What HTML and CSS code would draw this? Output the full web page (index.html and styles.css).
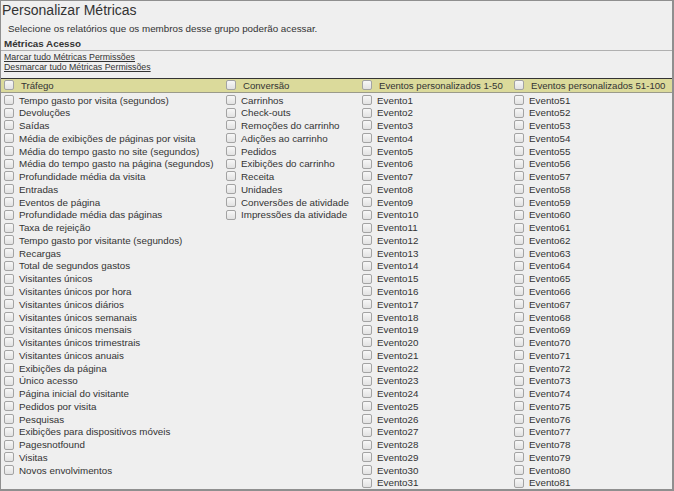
FILE: index.html
```html
<!DOCTYPE html>
<html lang="pt">
<head>
<meta charset="utf-8">
<title>Personalizar Métricas</title>
<link rel="stylesheet" href="styles.css">
</head>
<body>
<div class="frame">
  <h1 class="title">Personalizar Métricas</h1>
  <p class="intro">Selecione os relatórios que os membros desse grupo poderão acessar.</p>
  <div class="section-head">Métricas Acesso</div>
  <div class="links">
    <a href="#" class="link">Marcar tudo Métricas Permissões</a>
    <a href="#" class="link">Desmarcar tudo Métricas Permissões</a>
  </div>
  <div class="band">
    <label class="hcell"><input type="checkbox" class="cb"><span>Tráfego</span></label>
    <label class="hcell"><input type="checkbox" class="cb"><span>Conversão</span></label>
    <label class="hcell"><input type="checkbox" class="cb"><span>Eventos personalizados 1-50</span></label>
    <label class="hcell"><input type="checkbox" class="cb"><span>Eventos personalizados 51-100</span></label>
  </div>
  <div class="cols">
    <ul class="col">
      <li class="item"><input type="checkbox" class="cb"><span>Tempo gasto por visita (segundos)</span></li>
      <li class="item"><input type="checkbox" class="cb"><span>Devoluções</span></li>
      <li class="item"><input type="checkbox" class="cb"><span>Saídas</span></li>
      <li class="item"><input type="checkbox" class="cb"><span>Média de exibições de páginas por visita</span></li>
      <li class="item"><input type="checkbox" class="cb"><span>Média do tempo gasto no site (segundos)</span></li>
      <li class="item"><input type="checkbox" class="cb"><span>Média do tempo gasto na página (segundos)</span></li>
      <li class="item"><input type="checkbox" class="cb"><span>Profundidade média da visita</span></li>
      <li class="item"><input type="checkbox" class="cb"><span>Entradas</span></li>
      <li class="item"><input type="checkbox" class="cb"><span>Eventos de página</span></li>
      <li class="item"><input type="checkbox" class="cb"><span>Profundidade média das páginas</span></li>
      <li class="item"><input type="checkbox" class="cb"><span>Taxa de rejeição</span></li>
      <li class="item"><input type="checkbox" class="cb"><span>Tempo gasto por visitante (segundos)</span></li>
      <li class="item"><input type="checkbox" class="cb"><span>Recargas</span></li>
      <li class="item"><input type="checkbox" class="cb"><span>Total de segundos gastos</span></li>
      <li class="item"><input type="checkbox" class="cb"><span>Visitantes únicos</span></li>
      <li class="item"><input type="checkbox" class="cb"><span>Visitantes únicos por hora</span></li>
      <li class="item"><input type="checkbox" class="cb"><span>Visitantes únicos diários</span></li>
      <li class="item"><input type="checkbox" class="cb"><span>Visitantes únicos semanais</span></li>
      <li class="item"><input type="checkbox" class="cb"><span>Visitantes únicos mensais</span></li>
      <li class="item"><input type="checkbox" class="cb"><span>Visitantes únicos trimestrais</span></li>
      <li class="item"><input type="checkbox" class="cb"><span>Visitantes únicos anuais</span></li>
      <li class="item"><input type="checkbox" class="cb"><span>Exibições da página</span></li>
      <li class="item"><input type="checkbox" class="cb"><span>Único acesso</span></li>
      <li class="item"><input type="checkbox" class="cb"><span>Página inicial do visitante</span></li>
      <li class="item"><input type="checkbox" class="cb"><span>Pedidos por visita</span></li>
      <li class="item"><input type="checkbox" class="cb"><span>Pesquisas</span></li>
      <li class="item"><input type="checkbox" class="cb"><span>Exibições para dispositivos móveis</span></li>
      <li class="item"><input type="checkbox" class="cb"><span>Pagesnotfound</span></li>
      <li class="item"><input type="checkbox" class="cb"><span>Visitas</span></li>
      <li class="item"><input type="checkbox" class="cb"><span>Novos envolvimentos</span></li>
    </ul>
    <ul class="col">
      <li class="item"><input type="checkbox" class="cb"><span>Carrinhos</span></li>
      <li class="item"><input type="checkbox" class="cb"><span>Check-outs</span></li>
      <li class="item"><input type="checkbox" class="cb"><span>Remoções do carrinho</span></li>
      <li class="item"><input type="checkbox" class="cb"><span>Adições ao carrinho</span></li>
      <li class="item"><input type="checkbox" class="cb"><span>Pedidos</span></li>
      <li class="item"><input type="checkbox" class="cb"><span>Exibições do carrinho</span></li>
      <li class="item"><input type="checkbox" class="cb"><span>Receita</span></li>
      <li class="item"><input type="checkbox" class="cb"><span>Unidades</span></li>
      <li class="item"><input type="checkbox" class="cb"><span>Conversões de atividade</span></li>
      <li class="item"><input type="checkbox" class="cb"><span>Impressões da atividade</span></li>
    </ul>
    <ul class="col" id="ev1"></ul>
    <ul class="col" id="ev2"></ul>
  </div>
</div>
<script src="script.js"></script>
</body>
</html>
```

FILE: script.js
```js
function fill(id, from, to) {
  var ul = document.getElementById(id);
  for (var i = from; i <= to; i++) {
    var li = document.createElement('li');
    li.className = 'item';
    var cb = document.createElement('input');
    cb.type = 'checkbox';
    cb.className = 'cb';
    var s = document.createElement('span');
    s.textContent = 'Evento' + i;
    li.appendChild(cb);
    li.appendChild(s);
    ul.appendChild(li);
  }
}
fill('ev1', 1, 31);
fill('ev2', 51, 81);
```

FILE: styles.css
```css
html, body {
  margin: 0;
  padding: 0;
  background: #efefef;
}
body {
  font-family: "Liberation Sans", Arial, sans-serif;
  color: #333;
}
.frame {
  box-sizing: border-box;
  width: 674px;
  height: 491px;
  overflow: hidden;
  background: #efefef;
  border-top: 1px solid #8f8f8f;
  border-left: 1px solid #8f8f8f;
  border-right: 2px solid #8f8f8f;
  border-bottom: 2px solid #8f8f8f;
}
.title {
  margin: 0;
  padding-left: 1px;
  font-size: 14px;
  font-weight: normal;
  line-height: 18px;
  color: #333;
}
.intro {
  margin: 3px 0 0;
  padding-left: 7px;
  font-size: 9.8px;
  line-height: 13px;
}
.section-head {
  margin-top: 2px;
  padding-left: 3px;
  font-size: 9.8px;
  font-weight: bold;
  line-height: 13px;
  border-bottom: 1px solid #b0b0b0;
}
.links {
  margin-top: 1px;
  padding-left: 3px;
  display: flex;
  flex-direction: column;
  align-items: flex-start;
}
.link {
  font-size: 8.8px;
  line-height: 10px;
  color: #333;
  text-decoration: underline;
}
.band {
  margin-top: 6px;
  display: grid;
  grid-template-columns: 222px 136px 152px 1fr;
  height: 13px;
  background: #dbda9b;
  border-top: 1px solid #333;
  border-bottom: 1px solid #9a9a8a;
}
.hcell {
  display: flex;
  align-items: center;
  padding-left: 3px;
  font-size: 9.6px;
  line-height: 13px;
  white-space: nowrap;
}
.hcell .cb {
  margin-right: 7px;
}
.cols {
  display: grid;
  grid-template-columns: 222px 136px 152px 1fr;
  padding-top: 1.5px;
}
.col {
  list-style: none;
  margin: 0;
  padding: 0 0 0 3px;
}
.item {
  display: flex;
  align-items: center;
  height: 12.78px;
  font-size: 9.8px;
  line-height: 12.78px;
  white-space: nowrap;
}
.cb {
  -webkit-appearance: none;
  appearance: none;
  box-sizing: border-box;
  flex: none;
  width: 10px;
  height: 10px;
  margin: 0 5px 0 0;
  position: relative;
  top: -1px;
  border: 1px solid #a3a3a3;
  border-radius: 2px;
  background: linear-gradient(#f7f7f7, #e2e2e2);
}
```
